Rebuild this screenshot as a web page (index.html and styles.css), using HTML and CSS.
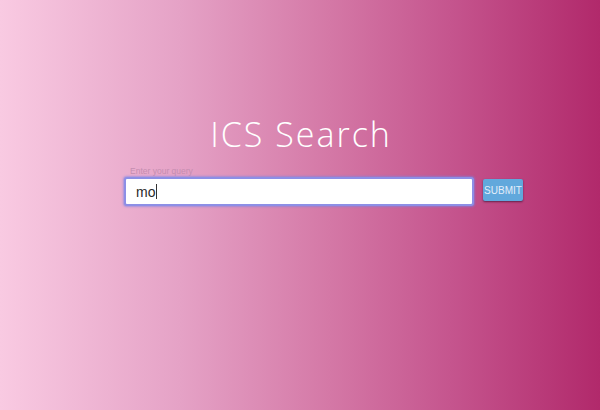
FILE: index.html
```html
<!DOCTYPE html>
<html>
<head>
<meta charset="utf-8">
<link rel="stylesheet" href="styles.css">
</head>
<body>
<main class="page">
  <h1 class="title">ICS Search</h1>
  <form class="search">
    <div class="field">
      <label class="label">Enter your query</label>
      <div class="input"><span class="value">mo</span><span class="caret"></span></div>
    </div>
    <button type="button" class="submit">SUBMIT</button>
  </form>
</main>
</body>
</html>
```
FILE: styles.css
```css
html, body {
  margin: 0;
  padding: 0;
}
body {
  width: 600px;
  height: 410px;
  overflow: hidden;
  background: linear-gradient(to right, #f9cae2 0%, #e5a2c6 30%, #d478a6 55%, #c5558e 75%, #b1296b 100%);
  font-family: "Liberation Sans", Arial, sans-serif;
}
.page {
  display: flex;
  flex-direction: column;
  padding-top: 112px;
}
.title {
  margin: 0;
  text-align: center;
  color: #ffffff;
  font-family: "Open Sans", sans-serif;
  font-weight: 300;
  font-size: 34px;
  line-height: 44px;
  letter-spacing: 2px;
  padding-left: 2px;
}
.search {
  display: flex;
  align-items: flex-start;
  gap: 9px;
  padding-left: 124px;
  margin-top: 10px;
}
.field {
  display: flex;
  flex-direction: column;
}
.label {
  font-size: 8.5px;
  line-height: 11px;
  color: #c48db0;
  padding-left: 6px;
}
.input {
  box-sizing: border-box;
  width: 350px;
  height: 29px;
  background: #ffffff;
  border: 2px solid #8d8fe6;
  border-radius: 3px;
  box-shadow: 0 0 2px 1px rgba(120, 130, 230, 0.6);
  display: flex;
  align-items: center;
  padding-left: 10px;
}
.value {
  font-size: 14px;
  color: #2a2a2a;
}
.caret {
  width: 1px;
  height: 15px;
  background: #333;
  margin-left: 1px;
}
.submit {
  box-sizing: border-box;
  width: 40px;
  height: 22px;
  margin-top: 13px;
  padding: 0;
  border: none;
  border-radius: 2px;
  background: #61a8dc;
  color: #e4eefa;
  font-family: "Liberation Sans", Arial, sans-serif;
  font-size: 10px;
  box-shadow: 0 1px 2px rgba(60, 20, 50, 0.7);
}
```
